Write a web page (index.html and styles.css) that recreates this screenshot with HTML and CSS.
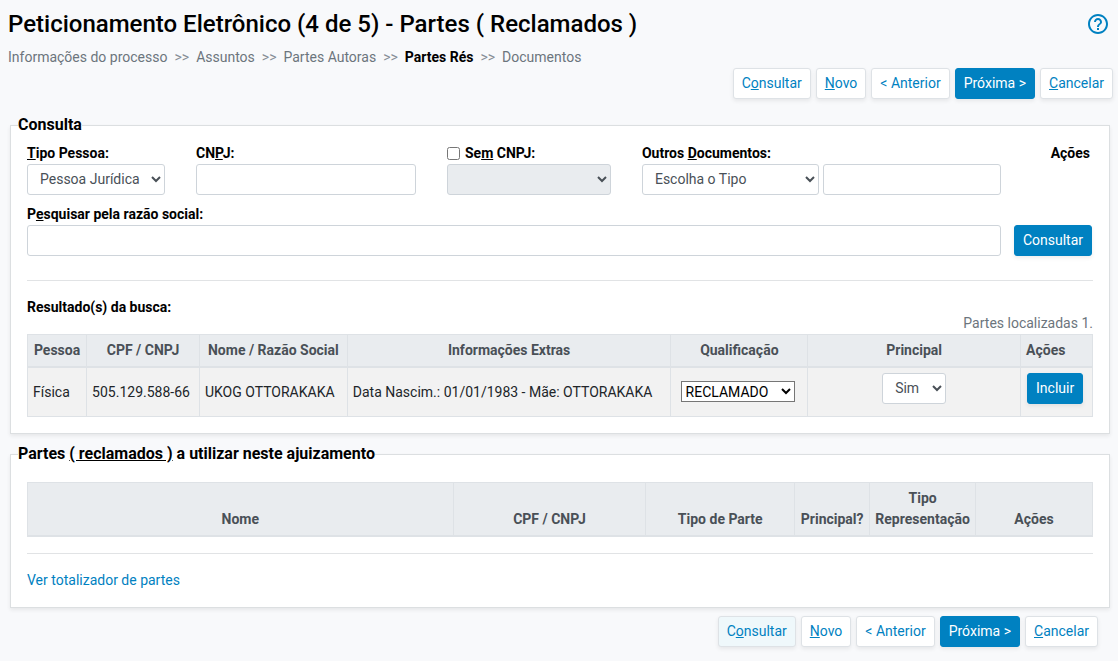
FILE: index.html
```html
<!DOCTYPE html>
<html lang="pt-BR">
<head>
<meta charset="utf-8">
<meta name="viewport" content="width=device-width, initial-scale=1">
<title>Peticionamento Eletrônico</title>
<link rel="stylesheet" href="styles.css">
</head>
<body>
<header class="page-header">
  <h1 class="page-title">Peticionamento Eletrônico (4 de 5) - Partes ( Reclamados )</h1>
  <button type="button" class="help" aria-label="Ajuda">
    <svg viewBox="0 0 24 24" width="24" height="24" aria-hidden="true"><path fill="currentColor" d="M11 18h2v-2h-2v2zm1-16C6.48 2 2 6.48 2 12s4.480 10 10 10 10-4.480 10-10S17.520 2 12 2zm0 18c-4.410 0-8-3.590-8-8s3.590-8 8-8 8 3.590 8 8-3.590 8-8 8zm0-14c-2.210 0-4 1.790-4 4h2c0-1.100.9-2 2-2s2 .9 2 2c0 2-3 1.750-3 5h2c0-2.250 3-2.500 3-5 0-2.210-1.790-4-4-4z"/></svg>
  </button>
</header>
<nav class="steps" aria-label="Etapas">
  <span>Informações do processo</span><span class="sep">&gt;&gt;</span>
  <span>Assuntos</span><span class="sep">&gt;&gt;</span>
  <span>Partes Autoras</span><span class="sep">&gt;&gt;</span>
  <strong class="current">Partes Rés</strong><span class="sep">&gt;&gt;</span>
  <span>Documentos</span>
</nav>
<div class="actions actions-top">
  <button type="button" class="btn">C<u>o</u>nsultar</button>
  <button type="button" class="btn"><u>N</u>ovo</button>
  <button type="button" class="btn">&lt; Anterior</button>
  <button type="button" class="btn btn-primary">Próxima &gt;</button>
  <button type="button" class="btn"><u>C</u>ancelar</button>
</div>
<main>
  <fieldset class="panel">
    <legend>Consulta</legend>
    <div class="search">
      <div class="fields">
        <div class="field">
          <label for="tipo"><u>T</u>ipo Pessoa:</label>
          <select id="tipo" class="control"><option>Pessoa Jurídica</option></select>
        </div>
        <div class="field">
          <label for="cnpj">CN<u>P</u>J:</label>
          <input id="cnpj" class="control" type="text">
        </div>
        <div class="field">
          <div class="check"><input id="sem" type="checkbox"><label for="sem">Se<u>m</u> CNPJ:</label></div>
          <select class="control" aria-label="Motivo sem CNPJ" disabled><option></option></select>
        </div>
        <div class="field">
          <label for="doc">Outros <u>D</u>ocumentos:</label>
          <div class="pair">
            <select id="doc" class="control"><option>Escolha o Tipo</option></select>
            <input class="control" type="text" aria-label="Número do documento">
          </div>
        </div>
        <div class="field field-wide">
          <label for="razao">P<u>e</u>squisar pela razão social:</label>
          <input id="razao" class="control" type="text">
        </div>
      </div>
      <div class="search-side">
        <span class="side-title">Ações</span>
        <button type="button" class="btn btn-primary">Consultar</button>
      </div>
    </div>
    <hr class="rule">
    <div class="results-head">
      <strong>Resultado(s) da busca:</strong>
      <span class="count">Partes localizadas 1.</span>
    </div>
    <table class="grid">
      <colgroup><col class="r1"><col class="r2"><col class="r3"><col class="r4"><col class="r5"><col class="r6"><col class="r7"></colgroup>
      <thead>
        <tr><th>Pessoa</th><th>CPF / CNPJ</th><th>Nome / Razão Social</th><th>Informações Extras</th><th>Qualificação</th><th>Principal</th><th class="left">Ações</th></tr>
      </thead>
      <tbody>
        <tr>
          <td>Física</td>
          <td>505.129.588-66</td>
          <td>UKOG OTTORAKAKA</td>
          <td>Data Nascim.: 01/01/1983 - Mãe: OTTORAKAKA</td>
          <td class="center"><select class="plain" aria-label="Qualificação"><option>RECLAMADO</option></select>&nbsp;</td>
          <td class="center"><select class="control control-small" aria-label="Principal"><option>Sim</option></select></td>
          <td><button type="button" class="btn btn-primary row-btn">Incluir</button></td>
        </tr>
      </tbody>
    </table>
  </fieldset>
  <fieldset class="panel">
    <legend>Partes <u>( reclamados )</u> a utilizar neste ajuizamento</legend>
    <table class="grid grid-parts">
      <colgroup><col class="p1"><col class="p2"><col class="p3"><col class="p4"><col class="p5"><col class="p6"></colgroup>
      <thead>
        <tr><th>Nome</th><th>CPF / CNPJ</th><th>Tipo de Parte</th><th>Principal?</th><th>Tipo<br>Representação</th><th>Ações</th></tr>
      </thead>
    </table>
    <hr class="rule rule-close">
    <a class="total" href="#">Ver totalizador de partes</a>
  </fieldset>
</main>
<div class="actions actions-bottom">
  <button type="button" class="btn btn-active">C<u>o</u>nsultar</button>
  <button type="button" class="btn"><u>N</u>ovo</button>
  <button type="button" class="btn">&lt; Anterior</button>
  <button type="button" class="btn btn-primary">Próxima &gt;</button>
  <button type="button" class="btn"><u>C</u>ancelar</button>
</div>
</body>
</html>
```
FILE: styles.css
```css
* { box-sizing: border-box; }

body {
  margin: 0;
  padding: 10px 0 14px;
  background: #f8f9fb;
  color: #000;
  font-family: Roboto, "Open Sans", sans-serif;
  font-size: 14px;
  line-height: 21px;
}

button, input, select { font: inherit; }
strong { font-weight: 700; }

.page-header {
  display: flex;
  align-items: center;
  justify-content: space-between;
  padding: 0 8px;
}
.page-title {
  margin: 0;
  font-size: 24px;
  font-weight: 500;
  line-height: 28px;
}
.help {
  display: flex;
  padding: 0;
  border: 0;
  background: none;
  color: #0081c1;
}

.steps {
  display: flex;
  gap: 7px;
  margin-top: 9px;
  padding: 0 8px;
  color: #6c757d;
}
.steps .sep { color: #868e96; }
.steps .current { color: #000; }

.actions {
  display: flex;
  justify-content: flex-end;
  gap: 5px;
}
.actions-top { padding-right: 5px; }
.actions-bottom { padding-right: 20px; }

.btn {
  height: 31px;
  padding: 0 8px 1px;
  border: 1px solid #dee2e6;
  border-radius: 3px;
  background: #fff;
  color: #0081c1;
  white-space: nowrap;
  box-shadow: 0 2px 4px rgba(0, 0, 0, 0.075);
}
.btn-primary {
  border-color: #0081c1;
  background: #0081c1;
  color: #fff;
}
.btn-active { background: #eff8fb; }

.panel {
  min-width: 0;
  margin: 0 8px 8px 10px;
  padding: 0 16px 16px;
  border: 1px solid #dcdfe1;
  background: #fff;
  box-shadow: 0 2px 4px rgba(0, 0, 0, 0.075);
}
main { padding-top: 14px; }
.panel legend {
  margin-left: -9px;
  padding: 0;
  font-size: 16px;
  font-weight: 700;
  line-height: 24px;
}

.search {
  display: flex;
  gap: 13px;
  padding-top: 6px;
}
.fields {
  flex: 1;
  display: grid;
  grid-template-columns: 138fr 220fr 164fr 359fr;
  gap: 9px 31px;
}
.field {
  display: flex;
  flex-direction: column;
  min-width: 0;
  font-weight: 700;
}
.field-wide { grid-column: 1 / -1; }
.check {
  display: flex;
  align-items: center;
  gap: 5px;
}
.check input {
  width: 13px;
  height: 13px;
  margin: 0;
}
.pair {
  display: grid;
  grid-template-columns: 1fr 1fr;
  gap: 4px;
}
.control {
  width: 100%;
  height: 31px;
  padding: 0 8px 1px;
  border: 1px solid #ced4da;
  border-radius: 3px;
  background: #fff;
  color: #495057;
  font-weight: 400;
}
.control:disabled {
  background: #e9ecef;
  opacity: 1;
}
.search-side {
  display: flex;
  flex-direction: column;
  justify-content: space-between;
  align-items: flex-end;
  padding-right: 1px;
}
.side-title {
  padding-right: 2px;
  font-weight: 700;
}

.rule {
  margin: 24px 0 16px;
  border: 0;
  border-top: 1px solid #e1e3e5;
}
.rule-close { margin-top: 16px; }

.results-head {
  display: flex;
  justify-content: space-between;
  height: 37px;
}
.count {
  align-self: flex-end;
  color: #6c757d;
}

.grid {
  width: 100%;
  border-collapse: collapse;
  table-layout: fixed;
}
.grid th, .grid td {
  padding: 5px;
  border: 1px solid #dee2e6;
}
.grid th {
  padding: 5px 0;
  border-bottom-width: 2px;
  background: #e9ecef;
  color: #495057;
  font-weight: 700;
  text-align: center;
  vertical-align: bottom;
  white-space: nowrap;
}
.grid .left {
  padding-left: 5px;
  text-align: left;
}
.grid td {
  background: #f2f2f2;
  color: #212529;
  white-space: nowrap;
}
.grid .center { text-align: center; }
.r1 { width: 5.550%; }
.r2 { width: 10.600%; }
.r3 { width: 13.880%; }
.r4 { width: 30.390%; }
.r5 { width: 12.850%; }
.r6 { width: 19.980%; }
.grid-parts { margin-top: 16px; }
.p1 { width: 39.960%; }
.p2 { width: 18.100%; }
.p3 { width: 13.980%; }
.p4 { width: 7.040%; }
.p5 { width: 9.940%; }

.plain {
  width: 114px;
  height: 21px;
  padding: 0;
  border: 1px solid #767676;
  border-radius: 0;
  background: #fff;
  color: #000;
}
.control-small {
  display: block;
  width: 64px;
  margin: 0 auto 7px;
}
.row-btn {
  display: block;
  margin: 0 0 7px 1px;
}
.total {
  display: inline-block;
  color: #0081c1;
  text-decoration: none;
}
```
